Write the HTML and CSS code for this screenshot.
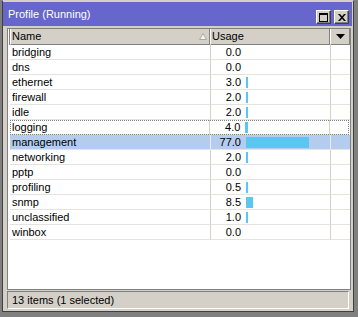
FILE: index.html
```html
<!DOCTYPE html>
<html lang="en">
<head>
    <meta charset="UTF-8">
    <meta name="viewport" content="width=device-width, initial-scale=1.0">
    <title>Profile (Running)</title>
    <link rel="stylesheet" href="styles.css">
</head>
<body>
    <div class="window">
        <div class="titlebar">
            <span class="title">Profile (Running)</span>
            <div class="title-buttons">
                <span class="tbtn">
                    <svg width="9" height="9" viewBox="0 0 9 9"><rect x="0.5" y="0.5" width="8" height="8" fill="none" stroke="#000"/><rect x="0" y="0" width="9" height="2" fill="#000"/></svg>
                </span>
                <span class="tbtn">
                    <svg width="8" height="7" viewBox="0 0 8 7"><path d="M0 0h2l2 2.2L6 0h2L5 3.5 8 7H6L4 4.8 2 7H0l3-3.5z" fill="#000"/></svg>
                </span>
            </div>
        </div>
        <div class="list">
            <div class="header">
                <div class="gutter"></div>
                <div class="hcell col-name">
                    <span>Name</span>
                    <svg class="sort" width="8" height="7" viewBox="0 0 8 7"><path d="M4 0.5L7.5 6.5H0.5z" fill="#f4f3ee" stroke="#a8a8a8"/></svg>
                </div>
                <div class="hcell col-usage">Usage</div>
                <div class="hcell col-menu">
                    <svg width="9" height="5" viewBox="0 0 9 5"><path d="M0 0h9L4.5 5z" fill="#000"/></svg>
                </div>
            </div>
            <div id="rows"></div>
        </div>
        <div class="status">13 items (1 selected)</div>
    </div>
    <script>
        const records = [
            { name: 'bridging', usage: 0.0 },
            { name: 'dns', usage: 0.0 },
            { name: 'ethernet', usage: 3.0 },
            { name: 'firewall', usage: 2.0 },
            { name: 'idle', usage: 2.0 },
            { name: 'logging', usage: 4.0 },
            { name: 'management', usage: 77.0 },
            { name: 'networking', usage: 2.0 },
            { name: 'pptp', usage: 0.0 },
            { name: 'profiling', usage: 0.5 },
            { name: 'snmp', usage: 8.5 },
            { name: 'unclassified', usage: 1.0 },
            { name: 'winbox', usage: 0.0 }
        ];

        const rows = document.getElementById('rows');
        records.forEach((record, index) => {
            const row = document.createElement('div');
            row.className = 'row';
            if (index === 5) row.classList.add('focused');
            if (index === 6) row.classList.add('selected');

            let bar = '';
            if (record.usage > 0) {
                const width = Math.max(2, Math.round(record.usage * 0.82));
                bar = `<span class="bar" style="width: ${width}px"></span>`;
            }

            row.innerHTML = `
                <div class="gutter"></div>
                <div class="cell col-name">${record.name}</div>
                <div class="cell col-usage"><span class="value">${record.usage.toFixed(1)}</span>${bar}</div>
                <div class="cell col-menu"></div>`;
            rows.appendChild(row);
        });
    </script>
</body>
</html>
```

FILE: styles.css
```css
body {
    margin: 0;
    background-color: #808080;
    font-family: "Liberation Sans", Arial, sans-serif;
    font-size: 11px;
    color: #000;
}

.window {
    box-sizing: border-box;
    width: 352px;
    height: 312px;
    margin-left: 2px;
    padding: 1px 1px 2px 0;
    background-color: #d4d0c8;
    border: 1px solid #404040;
    border-top-color: #d4d0c8;
    display: flex;
    flex-direction: column;
}

.titlebar {
    height: 24px;
    background-color: #6666cc;
    display: flex;
    justify-content: space-between;
    padding: 0 3px 0 5px;
}

.title {
    color: #fff;
    line-height: 24px;
}

.title-buttons {
    display: flex;
    gap: 3px;
    align-items: flex-end;
    padding-bottom: 2px;
}

.tbtn {
    box-sizing: border-box;
    width: 15px;
    height: 14px;
    background-color: #d4d0c8;
    border: 1px solid;
    border-color: #fff #404040 #404040 #fff;
    box-shadow: inset -1px -1px #808080;
    display: flex;
    align-items: center;
    justify-content: center;
}

.list {
    box-sizing: border-box;
    width: 344px;
    height: 262px;
    margin: 2px 0 0 4px;
    background-color: #fff;
    border: 1px solid #808080;
}

.header {
    display: flex;
    height: 16px;
    background-color: #d4d0c8;
}

.gutter {
    width: 2px;
    flex-shrink: 0;
}

.header .gutter {
    box-sizing: border-box;
    border-left: 1px solid #fff;
    border-right: 1px solid #808080;
}

.hcell {
    box-sizing: border-box;
    height: 16px;
    line-height: 14px;
    border-left: 1px solid #fff;
    border-right: 1px solid #808080;
    border-bottom: 1px solid #808080;
    padding-left: 1px;
}

.col-name {
    width: 200px;
    display: flex;
    justify-content: space-between;
}

.col-usage {
    width: 120px;
}

.col-menu {
    width: 20px;
}

.hcell.col-name {
    padding-right: 2px;
}

.sort {
    margin-top: 4px;
}

.hcell.col-menu {
    display: flex;
    align-items: center;
    justify-content: center;
    padding: 0 0 0 1px;
}

.row {
    display: flex;
    height: 15px;
}

.row .cell {
    box-sizing: border-box;
    height: 15px;
    line-height: 14px;
    border-bottom: 1px solid #e4e3df;
}

.row .col-name {
    padding-left: 2px;
}

.row .col-usage,
.row .col-menu {
    border-left: 1px solid #d4d0c8;
}

.row .col-usage {
    display: flex;
}

.value {
    width: 30px;
    text-align: right;
}

.bar {
    height: 11px;
    margin: 2px 0 0 5px;
    background-color: #5bc6ef;
}

.row.selected .cell {
    background-color: #b4cdef;
}

.row.selected .col-usage,
.row.selected .col-menu {
    border-left-color: #e6edf8;
}

.row.focused {
    outline: 1px dotted #808080;
    outline-offset: -1px;
    margin: 0 1px 0 2px;
}

.row.focused .gutter {
    width: 0;
}

.status {
    box-sizing: border-box;
    height: 18px;
    margin: 1px 0 0 4px;
    width: 342px;
    padding-left: 4px;
    line-height: 16px;
    border: 1px solid;
    border-color: #808080 #fff #fff #808080;
}
```
